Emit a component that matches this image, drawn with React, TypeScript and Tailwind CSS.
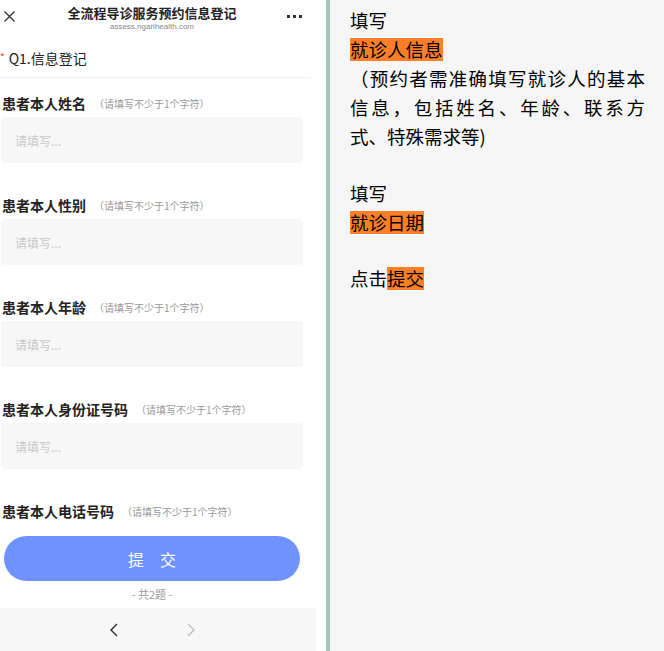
import React from "react";

const fields = [
  "患者本人姓名",
  "患者本人性别",
  "患者本人年龄",
  "患者本人身份证号码",
  "患者本人电话号码",
];

function Hl({ children }: { children: React.ReactNode }) {
  return <span className="inline-block bg-[#ff7f27] leading-[23px]">{children}</span>;
}

export default function App() {
  return (
    <div
      className="flex h-[651px] w-[664px] overflow-hidden bg-white"
      style={{ fontFamily: '"Noto Sans CJK SC", "Noto Sans", sans-serif' }}
    >
      {/* Left phone column */}
      <div className="flex w-[326px] shrink-0 flex-col bg-white">
        <div className="flex h-[651px] w-[316px] flex-col">
          {/* Header */}
          <div className="relative h-[36px] w-[304px] shrink-0">
            <svg
              className="absolute left-[4px] top-[11px]"
              width="11"
              height="11"
              viewBox="0 0 11 11"
              fill="none"
              stroke="#333"
              strokeWidth="1.3"
            >
              <path d="M0.5 0.5L10.5 10.5M10.5 0.5L0.5 10.5" />
            </svg>
            <div className="flex flex-col items-center pt-[4px]">
              <div className="text-[13px] font-bold leading-[18px] text-[#222]">全流程导诊服务预约信息登记</div>
              <div className="text-[8px] leading-[9px] text-[#888]" style={{ fontFamily: '"Liberation Sans", Arial, sans-serif' }}>
                assess.ngarihealth.com
              </div>
            </div>
            <div className="absolute left-[287px] top-[15px] flex gap-[3px]">
              <span className="block h-[3px] w-[3px] bg-[#333]" />
              <span className="block h-[3px] w-[3px] bg-[#333]" />
              <span className="block h-[3px] w-[3px] bg-[#333]" />
            </div>
          </div>

          {/* Q1 */}
          <div className="flex h-[42px] w-[310px] shrink-0 items-center border-b border-[#f0f2f5] pt-[4px]">
            <span className="mb-[4px] text-[10px] leading-none text-[#f23030]">*</span>
            <span className="ml-[4px] text-[14px] text-[#222]">Q1.信息登记</span>
          </div>

          {/* Fields */}
          <div className="h-[444px] w-[304px] shrink-0 overflow-hidden pt-[15px]">
            {fields.map((f) => (
              <div key={f} className="mb-[32px]">
                <div className="flex h-[20px] items-center pl-[2px]">
                  <span className="text-[14px] font-bold text-[#222]">{f}</span>
                  <span className="ml-[8px] text-[10px] text-[#999]">（请填写不少于1个字符）</span>
                </div>
                <input
                  readOnly
                  placeholder="请填写..."
                  className="mx-[1px] mt-[4px] block h-[46px] w-[302px] rounded-[4px] bg-[#f7f7f7] px-[14px] text-[12px] outline-none placeholder:text-[#c8c8c8]"
                />
              </div>
            ))}
          </div>

          {/* Submit */}
          <div className="w-[304px] shrink-0 px-[4px] pt-[14px]">
            <button className="flex h-[45px] w-[296px] items-center justify-center rounded-full bg-[#7092ff] text-[16px] tracking-[16px] text-white">
              <span className="pl-[16px]">提交</span>
            </button>
          </div>
          <div className="flex h-[27px] w-[304px] shrink-0 items-center justify-center text-[11px] text-[#999]">- 共2题 -</div>

          {/* Nav */}
          <div className="flex h-[43px] w-[316px] shrink-0 items-center bg-[#f7f7f7]">
            <div className="flex w-[304px] items-center justify-center gap-[69px]">
              <svg width="8" height="14" viewBox="0 0 8 14" fill="none" stroke="#222" strokeWidth="1.3">
                <path d="M7 1L1 7L7 13" />
              </svg>
              <svg width="8" height="14" viewBox="0 0 8 14" fill="none" stroke="#bbb" strokeWidth="1.3">
                <path d="M1 1L7 7L1 13" />
              </svg>
            </div>
          </div>
        </div>
      </div>

      {/* Divider */}
      <div className="w-[4px] shrink-0 bg-[#a1c7b8]" />

      {/* Right panel */}
      <div className="flex-1 bg-[#f6f6f6] pl-[20px] pr-[19px] pt-[6px] text-[18.5px] leading-[29px] text-black">
        <div>填写</div>
        <div>
          <Hl>就诊人信息</Hl>
        </div>
        <div className="text-justify">（预约者需准确填写就诊人的基本信息，包括姓名、年龄、联系方式、特殊需求等)</div>
        <div className="h-[28px]" />
        <div>填写</div>
        <div>
          <Hl>就诊日期</Hl>
        </div>
        <div className="h-[27px]" />
        <div>
          点击<Hl>提交</Hl>
        </div>
      </div>
    </div>
  );
}
